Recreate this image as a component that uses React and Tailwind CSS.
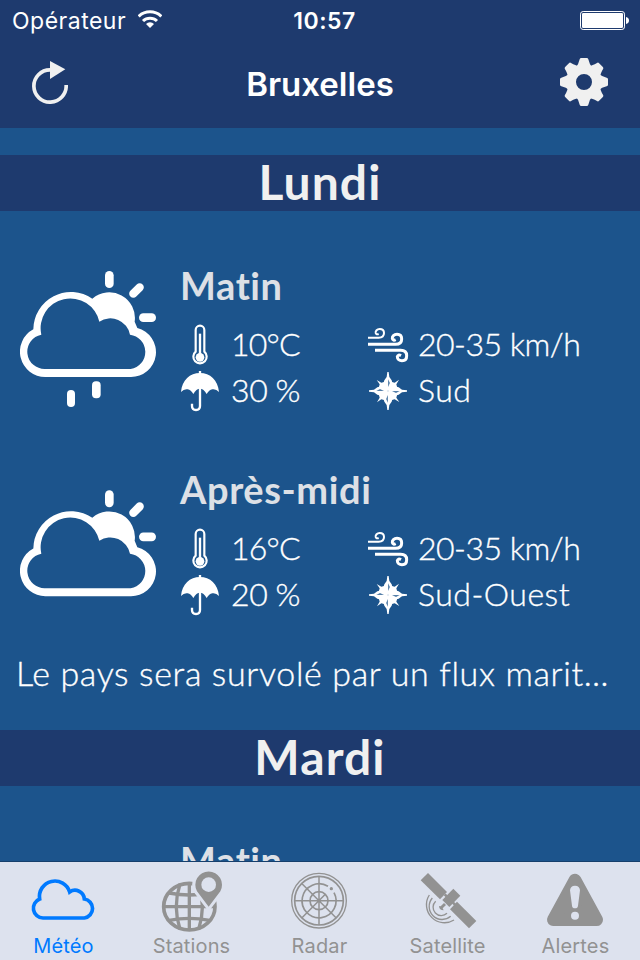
import React from 'react';

const days = [
  {
    name: 'Lundi',
    periods: [
      { label: 'Matin', rain: true, temp: '10°C', wind: '20-35 km/h', humidity: '30 %', direction: 'Sud' },
      { label: 'Après-midi', rain: false, temp: '16°C', wind: '20-35 km/h', humidity: '20 %', direction: 'Sud-Ouest' },
    ],
    summary: 'Le pays sera survolé par un flux marit…',
  },
  {
    name: 'Mardi',
    periods: [{ label: 'Matin', rain: false }],
  },
];

const WifiIcon = () => (
  <svg viewBox="416 33 72 54" className="mb-1 w-6 h-[18px]" fill="none" stroke="white" strokeWidth="9">
    <path d="M418 52 A49 49 0 0 1 486 52" />
    <path d="M431 66 A30 30 0 0 1 473 66" />
    <path d="M452 87 L440 75 A17 17 0 0 1 464 75 Z" fill="white" stroke="none" />
  </svg>
);

const BatteryIcon = () => (
  <svg viewBox="780 33 147 57" className="w-[49px] h-[19px]" fill="white">
    <rect x="781.5" y="34.5" width="132" height="54" rx="8" fill="none" stroke="white" strokeWidth="3" />
    <rect x="786" y="39" width="123" height="45" rx="4" />
    <path d="M918 51 Q927 53 927 61.5 Q927 70 918 72 Z" />
  </svg>
);

const RefreshIcon = () => (
  <svg viewBox="96 183 108 129" className="w-9 h-[43px]">
    <path d="M198.500 255 A48.500 48.500 0 1 1 150 209.500" fill="none" stroke="#f0f0f0" strokeWidth="11" />
    <path d="M150 183 L196 208 L150 237 Z" fill="#f0f0f0" />
  </svg>
);

const GearIcon = () => (
  <svg viewBox="-72 -72 144 144" className="w-12 h-12" fill="#f0f0f0">
    <circle r="38" fill="none" stroke="#f0f0f0" strokeWidth="28" />
    {[0, 45, 90, 135, 180, 225, 270, 315].map((a) => (
      <path key={a} transform={`rotate(${a})`} d="M-23 -46 Q-17 -52 -13 -68 Q-12 -72 -8 -72 H8 Q12 -72 13 -68 Q17 -52 23 -46 Z" />
    ))}
  </svg>
);

const CloudSunIcon = ({ rain }) => (
  <svg
    viewBox={rain ? '60 63 408 408' : '60 63 408 320'}
    className={rain ? 'w-[136px] h-[136px]' : 'w-[136px] h-[107px]'}
    fill="white"
  >
    <path
      fillRule="evenodd"
      d="M136 381 A76 76 0 0 1 100 238 A113 113 0 0 1 277 146 A77 77 0 0 1 404 215 L412 234 A74.700 74.700 0 0 1 392 381 Z
         M136 357 A52 52 0 0 1 124 254 A89 89 0 0 1 298 215 A60 60 0 0 1 390 254 A52 52 0 0 1 392 357 Z"
    />
    <rect x="315" y="63" width="26" height="51" rx="13" />
    <rect x="417" y="190" width="51" height="26" rx="13" />
    <path d="M400 131 L419 112" stroke="white" strokeWidth="25" strokeLinecap="round" />
    {rain && (
      <>
        <rect x="276" y="394" width="26" height="51" rx="12" />
        <rect x="201" y="420" width="24" height="51" rx="12" />
      </>
    )}
  </svg>
);

const ThermometerIcon = () => (
  <svg viewBox="30 222 120 120" className="w-10 h-10 overflow-visible" fill="none" stroke="white">
    <path d="M77 305 V240 A13 13 0 0 1 103 240 V305 A20 20 0 1 1 77 305 Z" strokeWidth="6.500" />
    <path d="M90 251 V320" strokeWidth="7" />
    <circle cx="90" cy="322" r="13" fill="white" stroke="none" />
  </svg>
);

const UmbrellaIcon = () => (
  <svg viewBox="30 360 120 120" className="w-10 h-10 overflow-visible">
    <path
      d="M33 426 C36 390 60 369 90 369 C120 369 144 390 147 426 Q138 416 127 418 Q117 420 110 432 Q101 416 90 416 Q79 416 70 432 Q63 420 53 418 Q42 416 33 426 Z"
      fill="white"
    />
    <path d="M90 363 V468 Q90 480 78 480 Q66 480 66 468 V461" fill="none" stroke="white" strokeWidth="7" />
  </svg>
);

const WindIcon = () => (
  <svg viewBox="54 42 120 120" className="w-10 h-10 overflow-visible" fill="none" stroke="white">
    <path d="M54 83 H86 C97 83 102 77 102 69 C102 61 96 57 89 57 C81 57 76 63 77 69 Q79 75 86 72" strokeWidth="6" />
    <path d="M54 103 H137 C149 103 155 96 155 87 C155 78 149 73 141 73 C132 73 126 79 127 86 Q129 93 137 89" strokeWidth="9" />
    <path d="M75 121 H152 C164 121 170 127 170 137 C170 147 164 152 156 152 C148 152 142 147 142 140 Q144 132 153 137" strokeWidth="9" />
  </svg>
);

const CompassIcon = () => (
  <svg viewBox="54 180 120 120" className="w-10 h-10 overflow-visible">
    <g transform="translate(114 243)">
      {[0, 90, 180, 270].map((a) => (
        <g key={a} transform={`rotate(${a})`}>
          <path d="M0 0 L-15 -18 L-11 -32 L-4 -42 L-2 -57 H2 L4 -42 L11 -32 L15 -18 Z" fill="white" />
          <path d="M0 0 L9 -28 L20 -25 L33 -34 L25 -20 L28 -9 Z" fill="white" />
        </g>
      ))}
      {[0, 90, 180, 270].map((a) => (
        <path key={a} transform={`rotate(${a})`} d="M1 -12 V-35 L5 -24 Z" fill="#1c548c" />
      ))}
    </g>
  </svg>
);

const CloudTab = () => (
  <svg viewBox="84 60 216 180" className="w-[72px] h-[60px]" fill="none" stroke="currentColor" strokeWidth="11">
    <path d="M129 204 A29.500 29.500 0 0 1 119 147 A46.300 46.300 0 0 1 209 126 A28 28 0 0 1 253 147 A28.800 28.800 0 0 1 253 204 Z" />
  </svg>
);

const StationsTab = () => (
  <svg viewBox="468 60 216 180" className="w-[72px] h-[60px] overflow-visible" fill="none" stroke="currentColor">
    <g strokeWidth="10">
      <ellipse cx="568" cy="170" rx="77" ry="70" strokeWidth="11" />
      <path d="M568 100 V240 M491 170 H645" />
      <path d="M540 102 C526 145 526 195 540 238 M596 102 C610 145 610 195 596 238" />
      <path d="M507 129 Q568 141 629 129 M507 211 Q568 199 629 211" />
    </g>
    <path d="M626 170 L591 124 A40 40 0 1 1 661 124 Z" fill="#dde2ee" stroke="#dde2ee" strokeWidth="18" />
    <path d="M626 170 L591 124 A40 40 0 1 1 661 124 Z" fill="currentColor" stroke="none" />
    <circle cx="626" cy="104" r="22" fill="#dde2ee" stroke="none" />
  </svg>
);

const RadarTab = () => (
  <svg viewBox="222 60 216 180" className="w-[72px] h-[60px]" fill="none" stroke="currentColor" strokeWidth="5">
    <circle cx="327" cy="152" r="82" strokeWidth="4" />
    <circle cx="327" cy="152" r="73" strokeWidth="5" />
    <path d="M354 109 A51 51 0 1 0 372 128" />
    <circle cx="327" cy="152" r="27" />
    <path d="M327 79 V225 M254 152 H400 M276 101 L378 203 M276 203 L346 133" strokeWidth="4.500" />
    <circle cx="364" cy="116" r="5" fill="currentColor" stroke="none" />
  </svg>
);

const SatelliteTab = () => (
  <svg viewBox="36 60 216 180" className="w-[72px] h-[60px]" fill="currentColor">
    <path d="M84 69 L141 126 L120 148 L62 91 Z" />
    <path d="M171 155 L229 213 L207 235 L150 178 Z" />
    <path d="M160 116 L181 137 L148 171 L127 150 Z" />
    <path d="M134 133 L167 166" stroke="currentColor" strokeWidth="8" />
    <path d="M117 168 A14 14 0 0 0 131 181 L128 175 L138 165 L132 159 L122 169 Z" />
    <g fill="none" stroke="currentColor" strokeWidth="4">
      <path d="M88 135 A54 54 0 0 0 162 210" />
      <path d="M97 144 A39 39 0 0 0 152 199" />
      <path d="M107 154 A24 24 0 0 0 141 190" />
    </g>
  </svg>
);

const AlertTab = () => (
  <svg viewBox="420 60 216 180" className="w-[72px] h-[60px]">
    <path d="M525 90 L460 209 H590 Z" fill="currentColor" stroke="currentColor" strokeWidth="38" strokeLinejoin="round" />
    <path d="M510 121 Q511 107 525 107 Q539 107 540 121 L534 167 Q533 175 525 175 Q517 175 516 167 Z" fill="#dde2ee" />
    <circle cx="525" cy="197" r="12" fill="#dde2ee" />
  </svg>
);

const tabs = [
  { label: 'Météo', Icon: CloudTab, active: true },
  { label: 'Stations', Icon: StationsTab },
  { label: 'Radar', Icon: RadarTab },
  { label: 'Satellite', Icon: SatelliteTab },
  { label: 'Alertes', Icon: AlertTab },
];

const Period = ({ period }) => (
  <section className="h-[204px] flex items-center gap-6 pl-5">
    <CloudSunIcon rain={period.rain} />
    <div className="flex-1 h-[152px]">
      <h3 className="mb-[14px] text-[38px] leading-[44px] font-bold tracking-[0.6px] text-[#dde0e6]">{period.label}</h3>
      {period.temp && (
        <div className="grid grid-cols-[188px_1fr] auto-rows-[46px] text-[32px] font-light whitespace-nowrap [-webkit-text-stroke:0.35px_white]">
          <div className="flex items-center gap-[11px] tracking-[-0.8px]"><ThermometerIcon />{period.temp}</div>
          <div className="flex items-center gap-[10px] tracking-[-0.5px]"><WindIcon />{period.wind}</div>
          <div className="flex items-center gap-[11px] tracking-[-0.4px]"><UmbrellaIcon />{period.humidity}</div>
          <div className="flex items-center gap-[10px] tracking-[0.5px]"><CompassIcon />{period.direction}</div>
        </div>
      )}
    </div>
  </section>
);

const App = () => {
  return (
    <div className="w-[640px] h-[960px] flex flex-col overflow-hidden bg-[#1c548c] text-white font-['Lato',sans-serif]">
      <header className="h-32 shrink-0 bg-[#1e3a6e] font-['Inter',sans-serif]">
        <div className="h-10 grid grid-cols-3 items-center pl-3 pr-[11px]">
          <div className="flex items-center gap-3 pt-[2px] text-[23px] tracking-[0.5px]">
            Opérateur
            <WifiIcon />
          </div>
          <span className="pt-[2px] pl-2 text-center text-[23px] font-semibold tracking-[0.5px]">10:57</span>
          <span className="justify-self-end"><BatteryIcon /></span>
        </div>
        <div className="h-[88px] flex items-center justify-between pl-8 pr-8">
          <button className="w-12 pb-[3px]"><RefreshIcon /></button>
          <h1 className="pt-[2px] text-[33px] font-semibold">Bruxelles</h1>
          <button className="pb-1"><GearIcon /></button>
        </div>
      </header>

      <main className="flex-1 min-h-0 overflow-hidden pt-[27px]">
        {days.map((day) => (
          <article key={day.name}>
            <h2 className="h-14 mb-[26px] bg-[#1e3a6e] text-center text-[48px] leading-[53px] font-bold tracking-[1.1px] text-[#f0f0f0]">{day.name}</h2>
            {day.periods.map((period) => (
              <Period key={period.label} period={period} />
            ))}
            {day.summary && (
              <p className="h-[85px] px-4 pt-[6px] text-[34px] leading-[44px] font-light tracking-[0.65px] whitespace-nowrap [-webkit-text-stroke:0.35px_white]">{day.summary}</p>
            )}
          </article>
        ))}
      </main>

      <nav className="h-[99px] shrink-0 grid grid-cols-5 border-t border-[#163f6c] bg-[#dde2ee] font-['Inter',sans-serif]">
        {tabs.map(({ label, Icon, active }) => (
          <button key={label} className={`flex flex-col items-center pt-2 ${active ? 'text-[#007aff]' : 'text-[#929292]'}`}>
            <Icon />
            <span className="pt-px pr-px text-[20px] leading-[30px] tracking-[0.15px]">{label}</span>
          </button>
        ))}
      </nav>
    </div>
  );
};

export default App;
